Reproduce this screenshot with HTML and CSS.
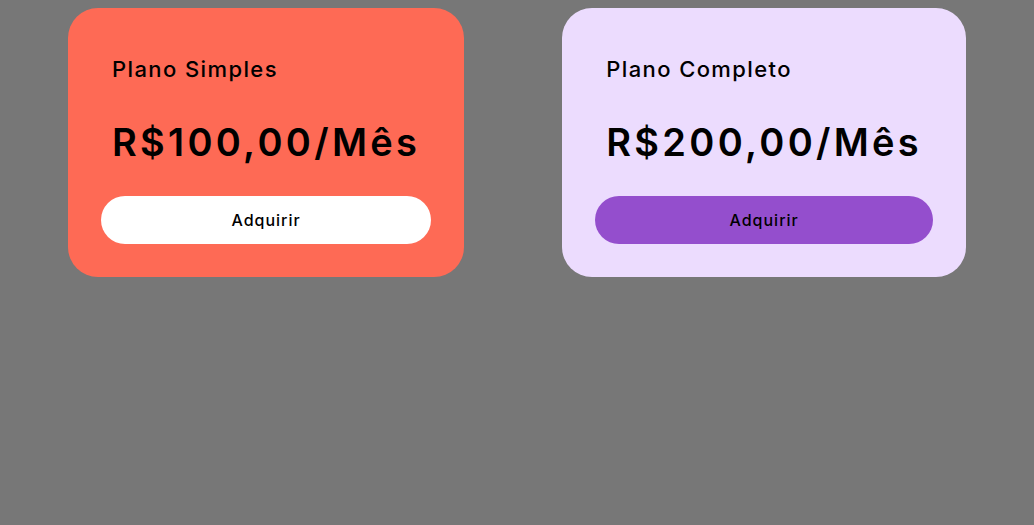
FILE: index.html
```html
<!DOCTYPE html>
<html lang="pt-BR">
<head>
<meta charset="utf-8">
<title>Planos</title>
<link rel="stylesheet" href="styles.css">
</head>
<body>
<main class="plans">
  <section class="card card-simple">
    <h2 class="plan-name">Plano Simples</h2>
    <p class="plan-price">R$100,00/Mês</p>
    <button class="buy buy-simple">Adquirir</button>
  </section>
  <section class="card card-full">
    <h2 class="plan-name">Plano Completo</h2>
    <p class="plan-price">R$200,00/Mês</p>
    <button class="buy buy-full">Adquirir</button>
  </section>
</main>
</body>
</html>
```

FILE: styles.css
```css
html {
  background: #777777;
}
body {
  margin: 8px;
  font-family: Inter, "Noto Sans", sans-serif;
  color: #000;
}
.plans {
  display: flex;
  justify-content: center;
  align-items: flex-start;
  gap: 98px;
}
.card {
  display: flex;
  flex-direction: column;
  padding: 33px;
  border-radius: 30px;
}
.card-simple { background: #fe6a55; }
.card-full { background: #ecdcfe; }
.plan-name {
  margin: 15px 11px 0;
  font-size: 22px;
  font-weight: 500;
  line-height: 26px;
  letter-spacing: 1.4px;
}
.plan-price {
  margin: 38px 11px 0;
  font-size: 38px;
  font-weight: 600;
  line-height: 44px;
  letter-spacing: 3.3px;
}
.buy {
  margin-top: 32px;
  height: 48px;
  border: none;
  border-radius: 24px;
  font-family: inherit;
  font-size: 16px;
  font-weight: 500;
  letter-spacing: 1px;
  color: #000;
}
.buy-simple { background: #ffffff; }
.buy-full { background: #944ecd; }
```
